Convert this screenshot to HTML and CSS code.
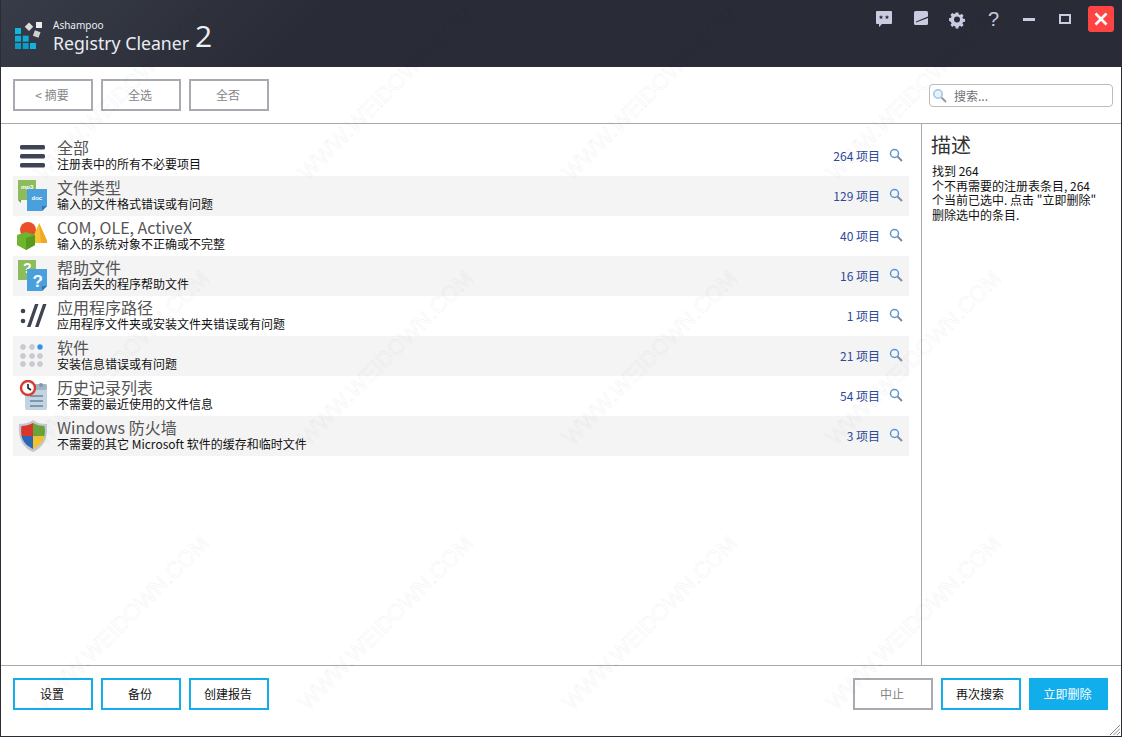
FILE: index.html
```html
<!DOCTYPE html>
<html lang="zh">
<head>
<meta charset="utf-8">
<title>Ashampoo Registry Cleaner 2</title>
<link rel="stylesheet" href="styles.css">
</head>
<body>
<div class="app">
  <header class="titlebar">
    <div class="brand">
      <svg class="logo" width="32" height="32" viewBox="0 0 32 32">
        <rect x="0" y="6" width="6" height="6" fill="#10b8e0"/>
        <rect x="0" y="13.7" width="6" height="6" fill="#10aad4"/>
        <rect x="0" y="21" width="6" height="6" fill="#0c9cc4"/>
        <rect x="7.7" y="13.7" width="6" height="6" fill="#10aad4"/>
        <rect x="7.7" y="21" width="6" height="6" fill="#0c9cc4"/>
        <rect x="15" y="21" width="6" height="6" fill="#10b4dc"/>
        <rect x="11" y="1.7" width="6" height="6" fill="#dcdcdc" transform="rotate(45 14 4.7)"/>
        <rect x="21" y="0" width="6" height="6" fill="#ececec"/>
        <rect x="18.7" y="9" width="6" height="6" fill="#cfcfcf" transform="rotate(20 21.7 12)"/>
      </svg>
      <div class="brand-text">
        <div class="brand-small">Ashampoo</div>
        <div class="brand-large">Registry Cleaner</div>
      </div>
      <div class="brand-num">2</div>
    </div>
    <div class="winctl">
      <svg class="ic ic-chat" width="18" height="18" viewBox="0 0 18 18"><path d="M2 1h14a1 1 0 0 1 1 1v11a1 1 0 0 1-1 1H7l-3 3v-3H2a1 1 0 0 1-1-1V2a1 1 0 0 1 1-1z" fill="#c9cce0"/><path d="M6 5l.7 1.500 1.500.1-1.200 1 .4 1.500L6 8.300l-1.400.8.4-1.500-1.200-1 1.500-.1zM12 5l.7 1.500 1.500.1-1.200 1 .4 1.500-1.400-.8-1.400.8.4-1.500-1.200-1 1.500-.1z" fill="#2a2d38"/></svg>
      <svg class="ic ic-note" width="16" height="16" viewBox="0 0 16 16"><rect x="1" y="1" width="14" height="14" rx="1.5" fill="#c9cce0"/><path d="M3 11.500L15 6.500V8L3 12.500z" fill="#2a2d38"/></svg>
      <svg class="ic ic-gear" width="18" height="18" viewBox="0 0 18 18"><path d="M7.5 1h3l.4 2.200 1.500.7 1.900-1.300 2.100 2.100-1.300 1.900.7 1.500 2.200.4v3l-2.200.4-.7 1.500 1.300 1.900-2.100 2.100-1.900-1.300-1.500.7-.4 2.200h-3l-.4-2.200-1.500-.7-1.900 1.300-2.100-2.100 1.300-1.900-.7-1.500L0 10.500v-3l2.200-.4.7-1.500L1.600 3.700l2.100-2.100 1.900 1.300 1.500-.7z" fill="#c9cce0" transform="translate(1 .5) scale(.89)"/><circle cx="9" cy="8.500" r="3" fill="#2a2d38"/></svg>
      <span class="help">?</span>
      <span class="min"></span>
      <span class="max"></span>
      <span class="close"><svg width="14" height="14" viewBox="0 0 14 14"><path d="M1.500 1.500l11 11M12.500 1.500l-11 11" stroke="#fff" stroke-width="2.600" fill="none"/></svg></span>
    </div>
  </header>

  <div class="toolbar">
    <div class="btns">
      <button class="btn off">&lt; 摘要</button>
      <button class="btn off">全选</button>
      <button class="btn off">全否</button>
    </div>
    <div class="search">
      <svg width="16" height="16" viewBox="0 0 16 16"><circle cx="6" cy="6" r="4.2" fill="#e8f2fb" stroke="#9cc4e8" stroke-width="1.5"/><path d="M9.500 9.500L14 14" stroke="#9a9a9a" stroke-width="2"/></svg>
      <span>搜索...</span>
    </div>
  </div>

  <main class="content">
    <section class="list">
      <div class="row">
        <div class="icon">
          <svg width="32" height="32" viewBox="0 0 32 32"><g fill="#3f4454"><rect x="5" y="5" width="25" height="4.500" rx="1.500"/><rect x="5" y="14" width="25" height="4.500" rx="1.500"/><rect x="5" y="23" width="25" height="4.500" rx="1.500"/></g></svg>
        </div>
        <div class="text"><div class="name">全部</div><div class="desc">注册表中的所有不必要项目</div></div>
        <div class="count">264 项目</div>
        <svg class="mag" width="14" height="14" viewBox="0 0 14 14"><circle cx="5.500" cy="5.500" r="4" fill="none" stroke="#5a98d2" stroke-width="1.500"/><path d="M8.500 8.500L13 13" stroke="#7f8c9a" stroke-width="2"/></svg>
      </div>
      <div class="row alt">
        <div class="icon">
          <svg width="32" height="32" viewBox="0 0 32 32"><path d="M3 0h18v20H3z" fill="#8cbc5c"/><path d="M3 20l3 3V20z" fill="#6f9a48"/><text class="ft" x="6" y="9" fill="#fff">mp3</text><path d="M12 9h20v17l-5 5H12z" fill="#4aa0dc"/><path d="M27 31v-5h5z" fill="#2f78b0"/><text class="ft" x="16.500" y="20" fill="#fff">doc</text></svg>
        </div>
        <div class="text"><div class="name">文件类型</div><div class="desc">输入的文件格式错误或有问题</div></div>
        <div class="count">129 项目</div>
        <svg class="mag" width="14" height="14" viewBox="0 0 14 14"><circle cx="5.500" cy="5.500" r="4" fill="none" stroke="#5a98d2" stroke-width="1.500"/><path d="M8.500 8.500L13 13" stroke="#7f8c9a" stroke-width="2"/></svg>
      </div>
      <div class="row">
        <div class="icon">
          <svg width="32" height="32" viewBox="0 0 32 32"><circle cx="13" cy="10" r="8" fill="#e8502a"/><path d="M24 3l9 20H16z" fill="#f6c433"/><path d="M24 3l9 20h-7z" fill="#f0a826"/><path d="M2 15l9-3 9 3v10l-9 5-9-5z" fill="#6cb52c"/><path d="M11 18l9-3v10l-9 5z" fill="#569a20"/></svg>
        </div>
        <div class="text"><div class="name">COM, OLE, ActiveX</div><div class="desc">输入的系统对象不正确或不完整</div></div>
        <div class="count">40 项目</div>
        <svg class="mag" width="14" height="14" viewBox="0 0 14 14"><circle cx="5.500" cy="5.500" r="4" fill="none" stroke="#5a98d2" stroke-width="1.500"/><path d="M8.500 8.500L13 13" stroke="#7f8c9a" stroke-width="2"/></svg>
      </div>
      <div class="row alt">
        <div class="icon">
          <svg width="32" height="32" viewBox="0 0 32 32"><path d="M3 0h18v20H3z" fill="#8cbc5c"/><text class="q" x="8" y="13" fill="#fff">?</text><path d="M12 9h20v17l-5 5H12z" fill="#4aa0dc"/><path d="M27 31v-5h5z" fill="#2f78b0"/><text class="q2" x="17.500" y="27" fill="#fff">?</text></svg>
        </div>
        <div class="text"><div class="name">帮助文件</div><div class="desc">指向丢失的程序帮助文件</div></div>
        <div class="count">16 项目</div>
        <svg class="mag" width="14" height="14" viewBox="0 0 14 14"><circle cx="5.500" cy="5.500" r="4" fill="none" stroke="#5a98d2" stroke-width="1.500"/><path d="M8.500 8.500L13 13" stroke="#7f8c9a" stroke-width="2"/></svg>
      </div>
      <div class="row">
        <div class="icon">
          <svg width="32" height="32" viewBox="0 0 32 32"><g fill="#3f4454"><circle cx="8" cy="11" r="2.300"/><circle cx="8" cy="21" r="2.300"/><path d="M20 4h3.500l-8 23H12zM28 4h3.500l-8 23H20z"/></g></svg>
        </div>
        <div class="text"><div class="name">应用程序路径</div><div class="desc">应用程序文件夹或安装文件夹错误或有问题</div></div>
        <div class="count">1 项目</div>
        <svg class="mag" width="14" height="14" viewBox="0 0 14 14"><circle cx="5.500" cy="5.500" r="4" fill="none" stroke="#5a98d2" stroke-width="1.500"/><path d="M8.500 8.500L13 13" stroke="#7f8c9a" stroke-width="2"/></svg>
      </div>
      <div class="row alt">
        <div class="icon">
          <svg width="32" height="32" viewBox="0 0 32 32"><g fill="#cbccd5" stroke="#b4b6c0" stroke-width=".6"><circle cx="8" cy="7" r="2.400"/><circle cx="17" cy="7" r="2.400"/><circle cx="8" cy="16" r="2.400"/><circle cx="17" cy="16" r="2.400"/><circle cx="25" cy="16" r="2.400"/><circle cx="8" cy="24" r="2.400"/><circle cx="17" cy="24" r="2.400"/><circle cx="25" cy="24" r="2.400"/></g><circle cx="25" cy="7" r="2.700" fill="#3a90e6"/></svg>
        </div>
        <div class="text"><div class="name">软件</div><div class="desc">安装信息错误或有问题</div></div>
        <div class="count">21 项目</div>
        <svg class="mag" width="14" height="14" viewBox="0 0 14 14"><circle cx="5.500" cy="5.500" r="4" fill="none" stroke="#5a98d2" stroke-width="1.500"/><path d="M8.500 8.500L13 13" stroke="#7f8c9a" stroke-width="2"/></svg>
      </div>
      <div class="row">
        <div class="icon">
          <svg width="32" height="32" viewBox="0 0 32 32"><rect x="10" y="4" width="22" height="26" rx="2" fill="#c3d3df"/><rect x="10" y="4" width="22" height="6" rx="2" fill="#9fb5c6"/><circle cx="26" cy="5" r="2" fill="#8298aa"/><path d="M15 15h13v2H15zM15 20h13v2H15zM15 25h13v2H15z" fill="#7d99af"/><circle cx="13" cy="8" r="7" fill="#fff" stroke="#d83a30" stroke-width="2.400"/><path d="M13 4v4l3 2" stroke="#222" stroke-width="1.600" fill="none"/></svg>
        </div>
        <div class="text"><div class="name">历史记录列表</div><div class="desc">不需要的最近使用的文件信息</div></div>
        <div class="count">54 项目</div>
        <svg class="mag" width="14" height="14" viewBox="0 0 14 14"><circle cx="5.500" cy="5.500" r="4" fill="none" stroke="#5a98d2" stroke-width="1.500"/><path d="M8.500 8.500L13 13" stroke="#7f8c9a" stroke-width="2"/></svg>
      </div>
      <div class="row alt">
        <div class="icon">
          <svg width="32" height="32" viewBox="0 0 32 32"><g transform="translate(2 0)"><path d="M16 0c4 3 9 4 14 4 1 12-2 23-14 28C4 27 1 16 2 4c5 0 10-1 14-4z" fill="#c3c8d0"/><path d="M16 3v13H4.500C4 12 4 9 4.500 6c4-.2 8-1 11.500-3z" fill="#d8352c"/><path d="M16 3c3.500 2 7.500 2.800 11.500 3 .5 3 .5 6 0 10H16z" fill="#6aa53a"/><path d="M4.500 16H16v13c-6-3-10-7-11.500-13z" fill="#2a66b4"/><path d="M16 16h11.500c-1.500 6-5.500 10-11.500 13z" fill="#f2c230"/></g></svg>
        </div>
        <div class="text"><div class="name">Windows 防火墙</div><div class="desc">不需要的其它 Microsoft 软件的缓存和临时文件</div></div>
        <div class="count">3 项目</div>
        <svg class="mag" width="14" height="14" viewBox="0 0 14 14"><circle cx="5.500" cy="5.500" r="4" fill="none" stroke="#5a98d2" stroke-width="1.500"/><path d="M8.500 8.500L13 13" stroke="#7f8c9a" stroke-width="2"/></svg>
      </div>
    </section>
    <aside class="side">
      <h2>描述</h2>
      <p>找到 264<br>个不再需要的注册表条目, 264<br>个当前已选中. 点击 "立即删除"<br>删除选中的条目.</p>
    </aside>
  </main>

  <footer class="footer">
    <div class="btns">
      <button class="btn on">设置</button>
      <button class="btn on">备份</button>
      <button class="btn on">创建报告</button>
    </div>
    <div class="btns">
      <button class="btn off">中止</button>
      <button class="btn on">再次搜索</button>
      <button class="btn primary">立即删除</button>
    </div>
    <svg class="grip" width="11" height="11" viewBox="0 0 11 11"><path d="M11 1L1 11M11 4.500L4.500 11M11 8L8 11" stroke="#8a8a8a" stroke-width="1"/></svg>
  </footer>

  <div class="wm" aria-hidden="true">
    <span>WWW.WEIDOWN.COM</span><span>WWW.WEIDOWN.COM</span><span>WWW.WEIDOWN.COM</span><span>WWW.WEIDOWN.COM</span>
    <span>WWW.WEIDOWN.COM</span><span>WWW.WEIDOWN.COM</span><span>WWW.WEIDOWN.COM</span><span>WWW.WEIDOWN.COM</span>
    <span>WWW.WEIDOWN.COM</span><span>WWW.WEIDOWN.COM</span><span>WWW.WEIDOWN.COM</span><span>WWW.WEIDOWN.COM</span>
  </div>
</div>
</body>
</html>
```

FILE: styles.css
```css
* { box-sizing: border-box; }
html, body { margin: 0; padding: 0; }
body { width: 1122px; height: 737px; overflow: hidden; font-family: "Noto Sans CJK SC", "Noto Sans", sans-serif; background: #fff; }
.app { position: relative; width: 1122px; height: 737px; display: flex; flex-direction: column; border: 1px solid #2a2d38; border-top: 0; background: #fff; overflow: hidden; }

.titlebar { flex: 0 0 67px; margin: 0 -1px; background: linear-gradient(135deg, #383c48 0%, #292c36 28%, #292c36 100%); display: flex; justify-content: space-between; padding: 0 8px 0 15px; }
.brand { display: flex; align-items: flex-start; padding-top: 22px; }
.brand-text { margin-left: 6px; color: #e9edf2; font-family: "Noto Sans", sans-serif; margin-top: -2px; }
.brand-small { font-size: 10px; line-height: 12px; margin-top: -1px; }
.brand-large { font-size: 17.7px; line-height: 24px; }
.brand-num { color: #eef2f6; font-family: "Open Sans", sans-serif; font-size: 30px; line-height: 40px; margin-left: 6px; margin-top: -6px; font-weight: 400; }

.winctl { position: relative; width: 240px; }
.winctl > * { position: absolute; }
.ic-chat { left: 1px; top: 10px; }
.ic-note { left: 39px; top: 10px; }
.ic-gear { left: 74px; top: 11px; }
.help { left: 114px; top: 8px; color: #c9cce0; font: 20px/22px "Liberation Sans", sans-serif; }
.min { left: 149px; top: 18px; width: 12px; height: 3px; background: #c9cce0; }
.max { left: 185px; top: 14px; width: 12px; height: 10px; border: 2px solid #c9cce0; }
.close { left: 214px; top: 6px; width: 26px; height: 26px; background: #ff4444; border-radius: 3px; display: flex; align-items: center; justify-content: center; }

.toolbar { flex: 0 0 57px; display: flex; justify-content: space-between; align-items: flex-start; padding: 12px 8px 0 12px; border-bottom: 1px solid #a9a9ae; }
.btns { display: flex; gap: 8px; }
.btn { width: 80px; height: 32px; background: #fff; font-family: "Noto Sans CJK SC", sans-serif; font-size: 12px; padding: 0 2px 2px 0; border-style: solid; border-width: 2px; border-radius: 0; }
.btn.off { border-color: #a9a9b1; color: #85858a; }
.btn.on { border-color: #12aeec; color: #111; }
.btn.primary { width: 79px; border-color: #12aeec; background: #12aeec; color: #fff; }

.search { width: 184px; height: 23px; margin-top: 5px; border: 1px solid #bcbcbc; border-radius: 4px; display: flex; align-items: center; padding-left: 2px; color: #707075; font-size: 12px; }
.search span { margin-left: 6px; }

.content { flex: 1; display: flex; min-height: 0; }
.list { flex: 1; padding: 12px 12px 0 12px; }
.side { flex: 0 0 200px; border-left: 1px solid #a9a9ae; padding: 8px 9px 0 9px; }
.side h2 { margin: 0; font-size: 20px; line-height: 26px; font-weight: 400; color: #333; }
.side p { margin: 6px 0 0 1px; font-size: 12px; line-height: 14.5px; color: #111; }

.row { height: 40px; display: flex; align-items: center; }
.row.alt { background: #f4f4f4; }
.icon { width: 32px; height: 32px; margin: 0 10px 0 2px; }
.icon svg { display: block; }
.ft { font: bold 6px "Liberation Sans", sans-serif; }
.q { font: bold 14px "Liberation Sans", sans-serif; }
.q2 { font: bold 17px "Liberation Sans", sans-serif; }
.text { flex: 1; padding-bottom: 2px; }
.name { font-size: 16px; line-height: 17px; color: #555; }
.desc { font-size: 12px; line-height: 15px; color: #111; }
.count { font-size: 12px; color: #2c4a9a; margin-right: 9px; padding-bottom: 2px; }
.mag { margin-right: 6px; margin-bottom: 2px; }

.footer { flex: 0 0 71px; border-top: 1px solid #a9a9ae; display: flex; justify-content: space-between; padding: 12px 13px 0 12px; position: relative; }
.grip { position: absolute; right: 1px; bottom: 1px; }

.wm { position: absolute; left: -11px; top: -40px; display: grid; grid-template-columns: repeat(4, 264px); grid-auto-rows: 265px; pointer-events: none; }
.wm span { font: 400 22px/26px "Liberation Sans", sans-serif; color: transparent; -webkit-text-stroke: 1px rgba(0,0,0,.05); transform: rotate(-45deg); white-space: nowrap; place-self: center; }
```
